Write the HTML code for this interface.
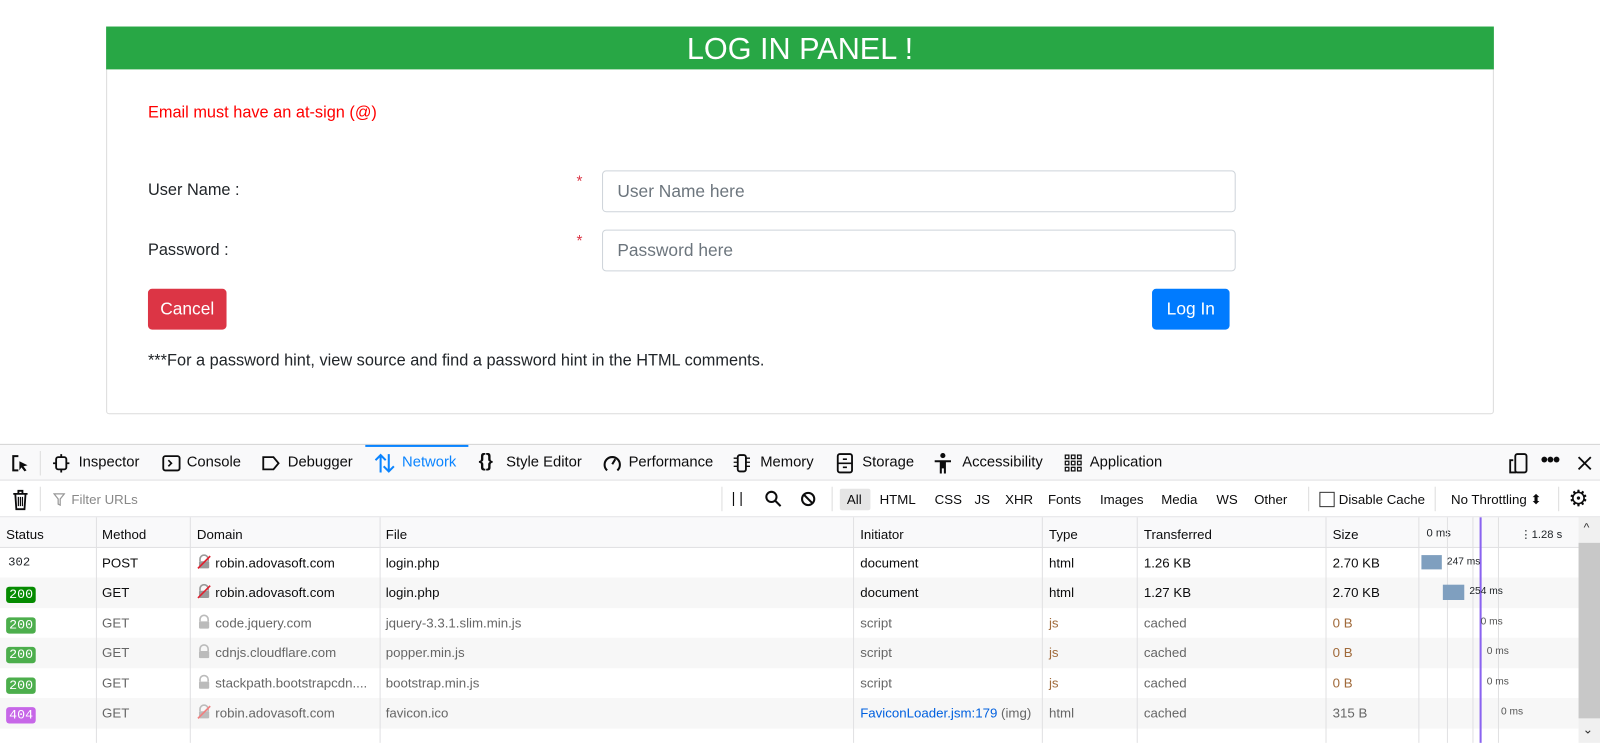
<!DOCTYPE html>
<html><head><meta charset="utf-8"><style>
*{box-sizing:border-box;margin:0;padding:0}
html,body{width:1600px;height:728px;overflow:hidden;background:#fff}
#w{position:absolute;left:0;top:0;width:1568px;height:714px;transform:scale(1.0204);transform-origin:0 0;font-family:"Liberation Sans",sans-serif;color:#212529}
.a{position:absolute;white-space:nowrap}
.card{position:absolute;left:104px;top:26px;width:1360px;height:380px;border:1px solid #dcdcdc;border-radius:3px}
.hdr{position:absolute;left:104px;top:26px;width:1360px;height:42px;background:#28a745;color:#fff;font-size:30px;text-align:center;line-height:46px}
.inp{position:absolute;left:590px;width:621px;height:41px;border:1px solid #ced4da;border-radius:4px;color:#6c757d;font-size:17px;padding-left:14px;line-height:39px}
.lbl{font-size:16px;color:#212529}
.star{color:#dc3545;font-size:15px}
.dt{font-size:14.5px;color:#0c0c0d}
.sm{font-size:13px;color:#0c0c0d}
.row{position:absolute;left:0;width:1547px;height:29.5px}
.vl{position:absolute;top:507px;width:1px;height:221px;background:#e0e0e2}
.badge{display:inline-block;color:#fff;font-family:"Liberation Mono",monospace;font-size:13px;border-radius:3px;padding:0 3px;line-height:16px}
</style></head><body><div id="w">
<div class="card"></div>
<div class="hdr">LOG IN PANEL !</div>
<div class="a" style="left:145px;top:102px;color:#f00;font-size:16px">Email must have an at-sign (@)</div>
<div class="a lbl" style="left:145px;top:178px">User Name :</div>
<div class="a star" style="left:565px;top:170px">*</div>
<div class="inp" style="top:167px">User Name here</div>
<div class="a lbl" style="left:145px;top:237px">Password :</div>
<div class="a star" style="left:565px;top:228px">*</div>
<div class="inp" style="top:225px">Password here</div>
<div class="a" style="left:145px;top:283px;width:77px;height:40px;background:#dc3545;border-radius:4px;color:#fff;font-size:17px;text-align:center;line-height:40px">Cancel</div>
<div class="a" style="left:1129px;top:283px;width:76px;height:40px;background:#007bff;border-radius:4px;color:#fff;font-size:17px;text-align:center;line-height:40px">Log In</div>
<div class="a lbl" style="left:145px;top:345px">***For a password hint, view source and find a password hint in the HTML comments.</div>

<div class="a" style="left:0;top:435px;width:1600px;height:1px;background:#d0d0d0"></div>
<div class="a" style="left:0;top:436px;width:1600px;height:35px;background:#f9f9fa;border-bottom:1px solid #e0e0e2"></div>
<div class="a" style="left:358px;top:436px;width:101px;height:2px;background:#0a84ff"></div>
<svg class="a" style="left:10px;top:445px" width="20" height="20" viewBox="0 0 20 20"><path d="M8 2H3v14h5" fill="none" stroke="#0c0c0d" stroke-width="2"/><path d="M9 7l8 4-4 1 3 4-2 1-3-4-2 3z" fill="#0c0c0d"/></svg>
<div class="a" style="left:39px;top:442px;width:1px;height:24px;background:#ddd"></div>
<svg class="a" style="left:50px;top:444px" width="20" height="20" viewBox="0 0 20 20"><rect x="5" y="4" width="10" height="12" rx="2" fill="none" stroke="#0c0c0d" stroke-width="1.8"/><path d="M10 1v3M10 16v3M2 10h3M15 10h3" stroke="#0c0c0d" stroke-width="1.8"/></svg>
<div class="a dt" style="left:77px;top:445px">Inspector</div>
<svg class="a" style="left:158px;top:444px" width="20" height="20" viewBox="0 0 20 20"><rect x="2" y="3" width="16" height="14" rx="2" fill="none" stroke="#0c0c0d" stroke-width="1.8"/><path d="M7 7l3 3-3 3" fill="none" stroke="#0c0c0d" stroke-width="1.6"/></svg>
<div class="a dt" style="left:183px;top:445px">Console</div>
<svg class="a" style="left:255px;top:444px" width="20" height="20" viewBox="0 0 20 20"><path d="M3 4h10l5 6-5 6H3z" fill="none" stroke="#0c0c0d" stroke-width="1.8"/></svg>
<div class="a dt" style="left:282px;top:445px">Debugger</div>
<svg class="a" style="left:366px;top:443px" width="22" height="22" viewBox="0 0 22 22"><path d="M7 20V3M2 8l5-5 5 5M15 2v17M10 14l5 5 5-5" fill="none" stroke="#0a84ff" stroke-width="2"/></svg>
<div class="a dt" style="left:394px;top:445px;color:#0a84ff">Network</div>
<div class="a" style="left:469px;top:441px;font-size:18px;font-weight:bold;color:#0c0c0d">{}</div>
<div class="a dt" style="left:496px;top:445px">Style Editor</div>
<svg class="a" style="left:590px;top:444px" width="20" height="20" viewBox="0 0 20 20"><path d="M5 17A7.5 7.5 0 1 1 15 17" fill="none" stroke="#0c0c0d" stroke-width="2"/><path d="M10 11l3-5" stroke="#0c0c0d" stroke-width="2"/></svg>
<div class="a dt" style="left:616px;top:445px">Performance</div>
<svg class="a" style="left:717px;top:444px" width="20" height="20" viewBox="0 0 20 20"><rect x="6" y="2" width="8" height="16" rx="2" fill="none" stroke="#0c0c0d" stroke-width="1.8"/><path d="M2 5h4M2 9h4M2 13h4M14 5h4M14 9h4M14 13h4" stroke="#0c0c0d" stroke-width="1.3"/></svg>
<div class="a dt" style="left:745px;top:445px">Memory</div>
<svg class="a" style="left:818px;top:443px" width="20" height="22" viewBox="0 0 20 22"><rect x="3" y="2" width="14" height="18" rx="2" fill="none" stroke="#0c0c0d" stroke-width="1.8"/><path d="M3 11h14M8 7h4M8 15h4" stroke="#0c0c0d" stroke-width="1.6"/></svg>
<div class="a dt" style="left:845px;top:445px">Storage</div>
<svg class="a" style="left:914px;top:443px" width="20" height="22" viewBox="0 0 20 22"><circle cx="10" cy="3.5" r="2.5" fill="#0c0c0d"/><path d="M2 8h16v2h-5v11h-2v-5h-2v5H7V10H2z" fill="#0c0c0d"/></svg>
<div class="a dt" style="left:943px;top:445px">Accessibility</div>
<svg class="a" style="left:1043px;top:445px" width="18" height="18" viewBox="0 0 18 18" fill="none" stroke="#0c0c0d" stroke-width="1.2"><rect x="1" y="1" width="3.5" height="3.5"/><rect x="7" y="1" width="3.5" height="3.5"/><rect x="13" y="1" width="3.5" height="3.5"/><rect x="1" y="7" width="3.5" height="3.5"/><rect x="7" y="7" width="3.5" height="3.5"/><rect x="13" y="7" width="3.5" height="3.5"/><rect x="1" y="13" width="3.5" height="3.5"/><rect x="7" y="13" width="3.5" height="3.5"/><rect x="13" y="13" width="3.5" height="3.5"/></svg>
<div class="a dt" style="left:1068px;top:445px">Application</div>
<svg class="a" style="left:1477px;top:443px" width="22" height="22" viewBox="0 0 22 22"><rect x="8" y="2" width="11" height="18" rx="2" fill="none" stroke="#0c0c0d" stroke-width="1.8"/><path d="M6 8H3v12h6" fill="none" stroke="#0c0c0d" stroke-width="1.8"/></svg>
<div class="a" style="left:1510px;top:440px;font-size:20px;font-weight:bold;color:#0c0c0d;letter-spacing:-1px">•••</div>
<svg class="a" style="left:1545px;top:446px" width="16" height="16" viewBox="0 0 16 16"><path d="M2 2l12 12M14 2L2 14" stroke="#0c0c0d" stroke-width="1.8"/></svg>

<div class="a" style="left:0;top:472px;width:1600px;height:35px;background:#fff;border-bottom:1px solid #e0e0e2"></div>
<svg class="a" style="left:10px;top:479px" width="20" height="22" viewBox="0 0 20 22"><path d="M3 5h14M8 5V2h4v3M5 5l1 15h8l1-15" fill="none" stroke="#0c0c0d" stroke-width="1.8"/><path d="M8 8v9M10 8v9M12 8v9" stroke="#0c0c0d" stroke-width="1.2"/></svg>
<div class="a" style="left:39px;top:477px;width:1px;height:24px;background:#ddd"></div>
<svg class="a" style="left:52px;top:483px" width="12" height="13" viewBox="0 0 12 13"><path d="M1 1h10L7 6v6L5 11V6z" fill="none" stroke="#999" stroke-width="1.2"/></svg>
<div class="a" style="left:70px;top:482px;font-size:13px;color:#888">Filter URLs</div>
<div class="a" style="left:707px;top:477px;width:1px;height:24px;background:#ddd"></div>
<div class="a" style="left:717px;top:480px;font-size:14px;color:#0c0c0d">| |</div>
<svg class="a" style="left:749px;top:480px" width="18" height="18" viewBox="0 0 18 18"><circle cx="7" cy="7" r="5" fill="none" stroke="#0c0c0d" stroke-width="2"/><path d="M11 11l5 5" stroke="#0c0c0d" stroke-width="2"/></svg>
<svg class="a" style="left:784px;top:481px" width="16" height="16" viewBox="0 0 16 16"><circle cx="8" cy="8" r="6" fill="none" stroke="#0c0c0d" stroke-width="2"/><path d="M4 4l8 8" stroke="#0c0c0d" stroke-width="2"/></svg>
<div class="a" style="left:815px;top:477px;width:1px;height:24px;background:#ddd"></div>
<div class="a" style="left:823px;top:479px;width:30px;height:21px;background:#e5e5e5;border-radius:2px"></div>
<div class="a sm" style="left:830px;top:482px">All</div>
<div class="a sm" style="left:862px;top:482px">HTML</div>
<div class="a sm" style="left:916px;top:482px">CSS</div>
<div class="a sm" style="left:955px;top:482px">JS</div>
<div class="a sm" style="left:985px;top:482px">XHR</div>
<div class="a sm" style="left:1027px;top:482px">Fonts</div>
<div class="a sm" style="left:1078px;top:482px">Images</div>
<div class="a sm" style="left:1138px;top:482px">Media</div>
<div class="a sm" style="left:1192px;top:482px">WS</div>
<div class="a sm" style="left:1229px;top:482px">Other</div>
<div class="a" style="left:1282px;top:477px;width:1px;height:24px;background:#ddd"></div>
<div class="a" style="left:1293px;top:482px;width:15px;height:15px;border:1px solid #333;background:#fff"></div>
<div class="a sm" style="left:1312px;top:482px">Disable Cache</div>
<div class="a" style="left:1406px;top:477px;width:1px;height:24px;background:#ddd"></div>
<div class="a sm" style="left:1422px;top:482px">No Throttling ⬍</div>
<div class="a" style="left:1527px;top:477px;width:1px;height:24px;background:#ddd"></div>
<div class="a" style="left:1537px;top:476px;font-size:22px;color:#0c0c0d">⚙</div>

<div class="a" style="left:0;top:507px;width:1547px;height:30px;background:#f9f9fa;border-bottom:1px solid #e0e0e2"></div>
<div class="a sm" style="left:6px;top:516px">Status</div>
<div class="a sm" style="left:100px;top:516px">Method</div>
<div class="a sm" style="left:193px;top:516px">Domain</div>
<div class="a sm" style="left:378px;top:516px">File</div>
<div class="a sm" style="left:843px;top:516px">Initiator</div>
<div class="a sm" style="left:1028px;top:516px">Type</div>
<div class="a sm" style="left:1121px;top:516px">Transferred</div>
<div class="a sm" style="left:1306px;top:516px">Size</div>
<div class="a" style="left:1398px;top:517px;font-size:11px">0 ms</div>
<div class="a" style="left:1490px;top:517px;font-size:11px">⋮1.28 s</div>

<div class="row" style="top:537px;background:#fff"></div>
<div class="row" style="top:566px;background:#f7f7f7"></div>
<div class="row" style="top:596px;background:#fff"></div>
<div class="row" style="top:625px;background:#f7f7f7"></div>
<div class="row" style="top:655px;background:#fff"></div>
<div class="row" style="top:684px;background:#f7f7f7"></div>

<div class="vl" style="left:94px"></div><div class="vl" style="left:186px"></div><div class="vl" style="left:372px"></div><div class="vl" style="left:836px"></div><div class="vl" style="left:1021px"></div><div class="vl" style="left:1114px"></div><div class="vl" style="left:1299px"></div><div class="vl" style="left:1390px"></div>
<div class="vl" style="left:1418px"></div><div class="vl" style="left:1443px"></div><div class="vl" style="left:1468px"></div>
<div class="a" style="left:1450px;top:507px;width:2px;height:221px;background:#8a63f0"></div>

<div class="a" style="left:8px;top:544px;font-family:'Liberation Mono',monospace;font-size:12px">302</div>
<div class="a sm" style="left:100px;top:544px">POST</div>
<div class="a sm" style="left:211px;top:544px">robin.adovasoft.com</div>
<div class="a sm" style="left:378px;top:544px">login.php</div>
<div class="a sm" style="left:843px;top:544px">document</div>
<div class="a sm" style="left:1028px;top:544px">html</div>
<div class="a sm" style="left:1121px;top:544px">1.26 KB</div>
<div class="a sm" style="left:1306px;top:544px">2.70 KB</div>
<div class="a" style="left:1393px;top:544px;width:20px;height:14px;background:#7f9fbf"></div>
<div class="a" style="left:1418px;top:545px;font-size:10px">247 ms</div>
<div class="a" style="left:6px;top:573px"><span class="badge" style="background:#058b00">200</span></div>
<div class="a sm" style="left:100px;top:573px">GET</div>
<div class="a sm" style="left:211px;top:573px">robin.adovasoft.com</div>
<div class="a sm" style="left:378px;top:573px">login.php</div>
<div class="a sm" style="left:843px;top:573px">document</div>
<div class="a sm" style="left:1028px;top:573px">html</div>
<div class="a sm" style="left:1121px;top:573px">1.27 KB</div>
<div class="a sm" style="left:1306px;top:573px">2.70 KB</div>
<div class="a" style="left:1414px;top:573px;width:21px;height:15px;background:#7f9fbf"></div>
<div class="a" style="left:1440px;top:574px;font-size:10px">254 ms</div>
<div class="a" style="left:6px;top:603px"><span class="badge" style="background:#4cae4c">200</span></div>
<div class="a sm" style="left:100px;top:603px;color:#666">GET</div>
<div class="a sm" style="left:211px;top:603px;color:#666">code.jquery.com</div>
<div class="a sm" style="left:378px;top:603px;color:#666">jquery-3.3.1.slim.min.js</div>
<div class="a sm" style="left:843px;top:603px;color:#666">script</div>
<div class="a sm" style="left:1028px;top:603px;color:#a06a3a">js</div>
<div class="a sm" style="left:1121px;top:603px;color:#666">cached</div>
<div class="a sm" style="left:1306px;top:603px;color:#a06a3a">0 B</div>
<div class="a" style="left:1451px;top:604px;font-size:10px;color:#555">0 ms</div>
<div class="a" style="left:6px;top:632px"><span class="badge" style="background:#4cae4c">200</span></div>
<div class="a sm" style="left:100px;top:632px;color:#666">GET</div>
<div class="a sm" style="left:211px;top:632px;color:#666">cdnjs.cloudflare.com</div>
<div class="a sm" style="left:378px;top:632px;color:#666">popper.min.js</div>
<div class="a sm" style="left:843px;top:632px;color:#666">script</div>
<div class="a sm" style="left:1028px;top:632px;color:#a06a3a">js</div>
<div class="a sm" style="left:1121px;top:632px;color:#666">cached</div>
<div class="a sm" style="left:1306px;top:632px;color:#a06a3a">0 B</div>
<div class="a" style="left:1457px;top:633px;font-size:10px;color:#555">0 ms</div>
<div class="a" style="left:6px;top:662px"><span class="badge" style="background:#4cae4c">200</span></div>
<div class="a sm" style="left:100px;top:662px;color:#666">GET</div>
<div class="a sm" style="left:211px;top:662px;color:#666">stackpath.bootstrapcdn....</div>
<div class="a sm" style="left:378px;top:662px;color:#666">bootstrap.min.js</div>
<div class="a sm" style="left:843px;top:662px;color:#666">script</div>
<div class="a sm" style="left:1028px;top:662px;color:#a06a3a">js</div>
<div class="a sm" style="left:1121px;top:662px;color:#666">cached</div>
<div class="a sm" style="left:1306px;top:662px;color:#a06a3a">0 B</div>
<div class="a" style="left:1457px;top:663px;font-size:10px;color:#555">0 ms</div>
<div class="a" style="left:6px;top:691px"><span class="badge" style="background:#c767e8">404</span></div>
<div class="a sm" style="left:100px;top:691px;color:#666">GET</div>
<div class="a sm" style="left:211px;top:691px;color:#666">robin.adovasoft.com</div>
<div class="a sm" style="left:378px;top:691px;color:#666">favicon.ico</div>
<div class="a sm" style="left:843px;top:691px;color:#0060df">FaviconLoader.jsm:179 <span style="color:#666">(img)</span></div>
<div class="a sm" style="left:1028px;top:691px;color:#666">html</div>
<div class="a sm" style="left:1121px;top:691px;color:#666">cached</div>
<div class="a sm" style="left:1306px;top:691px;color:#666">315 B</div>
<div class="a" style="left:1471px;top:692px;font-size:10px;color:#555">0 ms</div>

<svg class="a" style="left:193px;top:543px" width="14" height="15" viewBox="0 0 14 15"><path d="M3 7V5a4 4 0 0 1 8 0v2" fill="none" stroke="#999" stroke-width="1.6"/><rect x="2" y="7" width="10" height="7" rx="1" fill="#999"/><path d="M1 14L13 2" stroke="#e0202f" stroke-width="1.6"/></svg>
<svg class="a" style="left:193px;top:572px" width="14" height="15" viewBox="0 0 14 15"><path d="M3 7V5a4 4 0 0 1 8 0v2" fill="none" stroke="#999" stroke-width="1.6"/><rect x="2" y="7" width="10" height="7" rx="1" fill="#999"/><path d="M1 14L13 2" stroke="#e0202f" stroke-width="1.6"/></svg>
<svg class="a" style="left:193px;top:602px" width="14" height="15" viewBox="0 0 14 15"><path d="M3 7V5a4 4 0 0 1 8 0v2" fill="none" stroke="#bbb" stroke-width="1.6"/><rect x="2" y="7" width="10" height="7" rx="1" fill="#bbb"/></svg>
<svg class="a" style="left:193px;top:631px" width="14" height="15" viewBox="0 0 14 15"><path d="M3 7V5a4 4 0 0 1 8 0v2" fill="none" stroke="#bbb" stroke-width="1.6"/><rect x="2" y="7" width="10" height="7" rx="1" fill="#bbb"/></svg>
<svg class="a" style="left:193px;top:661px" width="14" height="15" viewBox="0 0 14 15"><path d="M3 7V5a4 4 0 0 1 8 0v2" fill="none" stroke="#bbb" stroke-width="1.6"/><rect x="2" y="7" width="10" height="7" rx="1" fill="#bbb"/></svg>
<svg class="a" style="left:193px;top:690px" width="14" height="15" viewBox="0 0 14 15"><path d="M3 7V5a4 4 0 0 1 8 0v2" fill="none" stroke="#bbb" stroke-width="1.6"/><rect x="2" y="7" width="10" height="7" rx="1" fill="#bbb"/><path d="M1 14L13 2" stroke="#f08080" stroke-width="1.6"/></svg>

<div class="a" style="left:1547px;top:507px;width:21px;height:221px;background:#f0f0f0"></div>
<div class="a" style="left:1547px;top:532px;width:21px;height:172px;background:#c8c8c8"></div>
<div class="a" style="left:1552px;top:510px;font-size:12px;color:#333">^</div>
<div class="a" style="left:1551px;top:708px;font-size:12px;color:#333">⌄</div>
</div></body></html>
